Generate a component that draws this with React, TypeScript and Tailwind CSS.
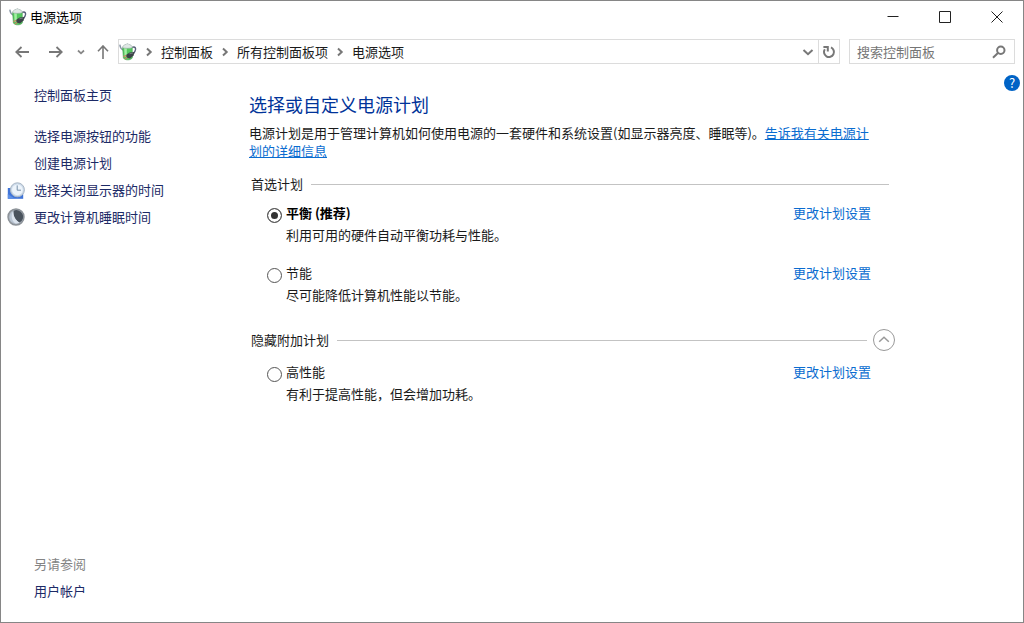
import { useState } from 'react'

type Plan = { id: string; name: string; desc: string }

const preferredPlans: Plan[] = [
  { id: 'balanced', name: '平衡 (推荐)', desc: '利用可用的硬件自动平衡功耗与性能。' },
  { id: 'saver', name: '节能', desc: '尽可能降低计算机性能以节能。' },
]

const extraPlans: Plan[] = [
  { id: 'high', name: '高性能', desc: '有利于提高性能，但会增加功耗。' },
]

function PowerIcon() {
  return (
    <svg width="18" height="18" viewBox="0 0 18 18" fill="none" className="shrink-0">
      <path d="M.8 1.6c.2 2.4.8 4.2 3.6 5.6" stroke="#8795a5" strokeWidth="1.3" />
      <path d="M12.8 4.6c3.6-1.6 4.6.8 3.2 3.6l-1.8 3" stroke="#59617a" strokeWidth="1.4" />
      <path d="M3.6 4.4h9.6l.2 10.4c-1.4 2.6-7.4 2.8-9 .2z" fill="#55c95f" stroke="#439a4b" strokeWidth=".6" />
      <path d="M5.2 5.2h2.6v8L5.6 14z" fill="#a3efa4" />
      <path d="M3.4 4.4C4 2.2 6 1.6 7 1.4c.4-1 2.4-1 2.8 0 1.6.2 3.2 1 3.6 3-2.4 1.2-7.6 1.2-10 0z" fill="#dfe8e5" stroke="#9aaba7" strokeWidth=".6" />
      <path d="m7 12 3.6-2.6 4.8-.4-.8 3.4-3.6 3-3.2-.6z" fill="#3b4347" />
      <path d="m10.4 10.8 3.6-.8" stroke="#818b90" strokeWidth=".8" />
      <path d="m4.4 13.8 2.8-1.4M5.8 16l2.4-1.4" stroke="#c58a60" strokeWidth="1.2" />
    </svg>
  )
}

function ClockIcon() {
  return (
    <svg width="18" height="19" viewBox="0 0 18 19" fill="none" className="shrink-0">
      <path d="M.8 7h15.4v10.8H.8z" fill="#3f74d8" />
      <path d="M.8 13 8 17.8H.8z" fill="#5f90e6" />
      <circle cx="10.4" cy="8.8" r="7" fill="#cddbea" stroke="#a9b6c4" strokeWidth="1" />
      <circle cx="10.4" cy="8.8" r="5.4" fill="#edf4fb" />
      <path d="M10.2 4.4v4.8h3.8" stroke="#7890a8" strokeWidth="1" />
    </svg>
  )
}

function MoonIcon() {
  return (
    <svg width="18" height="18" viewBox="0 0 18 18" fill="none" className="shrink-0">
      <circle cx="9" cy="9" r="8" fill="#a4abb4" stroke="#8c9298" strokeWidth="1.4" />
      <circle cx="9" cy="9" r="6.6" fill="#b9c5d3" />
      <path d="M6.4 2.9A6.6 6.6 0 1 1 12.6 14.6C8.4 12.4 5.8 7.6 6.4 2.9z" fill="#4a535d" />
      <path d="M6.4 2.9c-.4 4.8 2 9.4 6.2 11.7-1.2.8-3.2 1-4.6.6C4.6 12.2 3.4 7 6.4 2.9z" fill="#dce4ee" />
    </svg>
  )
}

function Chevron({ dir = 'right' }: { dir?: 'right' | 'down' }) {
  return (
    <svg width="12" height="12" viewBox="0 0 12 12" fill="none" stroke="#777" strokeWidth="2">
      {dir === 'right' ? <path d="m4 2.5 3.7 3.5L4 9.5" /> : <path d="m1.5 4 4.5 4.2L10.5 4" />}
    </svg>
  )
}

const sideLinks = [
  { text: '选择电源按钮的功能', icon: null },
  { text: '创建电源计划', icon: null },
  { text: '选择关闭显示器的时间', icon: <ClockIcon /> },
  { text: '更改计算机睡眠时间', icon: <MoonIcon /> },
]

const crumbs = ['控制面板', '所有控制面板项', '电源选项']

export default function App() {
  const [selected, setSelected] = useState('balanced')
  const [showExtra, setShowExtra] = useState(true)
  const [query, setQuery] = useState('')

  const renderPlan = (plan: Plan) => (
    <div key={plan.id} className="flex items-start justify-between pl-[18px] pr-6">
      <div>
        <div className="flex h-5 items-center gap-1">
          <input
            type="radio"
            id={plan.id}
            name="plan"
            checked={selected === plan.id}
            onChange={() => setSelected(plan.id)}
            className="mt-1 size-[15px] appearance-none rounded-full border border-[#555] bg-white checked:bg-[#333] checked:shadow-[inset_0_0_0_3px_#fff]"
          />
          <label htmlFor={plan.id} className={selected === plan.id ? 'font-bold text-black' : ''}>{plan.name}</label>
        </div>
        <p className="mt-0.5 pl-[19px]">{plan.desc}</p>
      </div>
      <a href="#settings" className="text-[#0a6cd0] hover:underline">更改计划设置</a>
    </div>
  )

  return (
    <div className="flex min-h-screen flex-col border border-[#868686] bg-white font-['Noto_Sans_CJK_SC','Liberation_Sans',sans-serif] text-[13px] leading-5 text-[#1a1a1a]">
      <header className="flex h-8 items-center justify-between">
        <div className="flex items-center gap-[3px] pl-2">
          <PowerIcon />
          <h1 className="text-black">电源选项</h1>
        </div>
        <div className="flex">
          <button aria-label="最小化" className="grid h-8 w-[52px] place-items-center hover:bg-gray-200">
            <svg width="12" height="12" stroke="#222"><path d="M.5 5.5h11" /></svg>
          </button>
          <button aria-label="最大化" className="grid h-8 w-[52px] place-items-center hover:bg-gray-200">
            <svg width="12" height="12" fill="none" stroke="#222"><path d="M.5.5h11v11H.5z" /></svg>
          </button>
          <button aria-label="关闭" className="grid h-8 w-[52px] place-items-center hover:bg-red-500">
            <svg width="12" height="12" stroke="#222"><path d="m.5.5 11 11m0-11-11 11" /></svg>
          </button>
        </div>
      </header>

      <nav className="mt-1.5 flex h-[25px] items-stretch pr-2">
        <div className="flex w-[117px] items-center pl-3.5">
          <button aria-label="后退">
            <svg width="14" height="14" viewBox="0 0 14 14" fill="none" stroke="#777" strokeWidth="1.8"><path d="M14 7H1m5.5-5L1.2 7l5.3 5" /></svg>
          </button>
          <button aria-label="前进" className="ml-5">
            <svg width="14" height="14" viewBox="0 0 14 14" fill="none" stroke="#777" strokeWidth="1.8"><path d="M0 7h13M7.5 2l5.3 5-5.3 5" /></svg>
          </button>
          <button aria-label="最近" className="ml-3.5">
            <svg width="8" height="8" viewBox="0 0 8 8" fill="none" stroke="#888" strokeWidth="1.8"><path d="m1 2.5 3 2.8 3-2.8" /></svg>
          </button>
          <button aria-label="向上" className="ml-3">
            <svg width="12" height="14" viewBox="0 0 12 14" fill="none" stroke="#777" strokeWidth="1.6"><path d="M6 14V1M1 6.3 6 1l5 5.3" /></svg>
          </button>
        </div>
        <div className="flex flex-1 items-center border border-[#dcdcdc]">
          <PowerIcon />
          {crumbs.map((c) => (
            <div key={c} className="flex items-center">
              <span className="grid w-6 place-items-center"><Chevron /></span>
              <a href="#path" className="hover:bg-sky-100">{c}</a>
            </div>
          ))}
          <button aria-label="历史记录" className="ml-auto px-1"><Chevron dir="down" /></button>
          <button aria-label="刷新" className="grid h-full w-[21px] place-items-center border-l border-[#dcdcdc]">
            <svg width="14" height="14" viewBox="0 0 14 14" fill="none" stroke="#777" strokeWidth="2">
              <path d="M9 2.4a5 5 0 1 1-6.2 1.8" />
              <path d="M1.4 2h4.4v4.4" />
            </svg>
          </button>
        </div>
        <div className="ml-[9px] flex w-[166px] items-center border border-[#dcdcdc] pl-[7px] pr-2">
          <input
            type="text"
            aria-label="搜索控制面板"
            value={query}
            onChange={(e) => setQuery(e.target.value)}
            placeholder="搜索控制面板"
            className="h-5 min-w-0 flex-1 outline-none placeholder:text-[#757575]"
          />
          <svg width="14" height="14" viewBox="0 0 14 14" fill="none" stroke="#777" strokeWidth="2">
            <circle cx="8.8" cy="5.2" r="3.7" />
            <path d="M6.2 7.8 1 12.8" />
          </svg>
        </div>
      </nav>

      <div className="flex flex-1">
        <aside className="flex w-[248px] shrink-0 flex-col pb-[21px] pl-1.5 pt-[21px] text-[#1c2a66]">
          <a href="#home" className="ml-[27px] hover:underline">控制面板主页</a>
          <ul className="mt-[21px] flex flex-col gap-[7px]">
            {sideLinks.map((l) => (
              <li key={l.text} className="flex h-5 items-center">
                <span className="w-[27px]">{l.icon}</span>
                <a href="#task" className="hover:underline">{l.text}</a>
              </li>
            ))}
          </ul>
          <div className="ml-[27px] mt-auto flex flex-col gap-[7px]">
            <p className="text-[#848484]">另请参阅</p>
            <a href="#users" className="hover:underline">用户帐户</a>
          </div>
        </aside>

        <main className="max-w-[646px] flex-1 pt-7">
          <h2 className="text-[18px] leading-6 text-[#003399]">选择或自定义电源计划</h2>
          <p className="mt-2 pr-[18px] leading-[18px]">
            电源计划是用于管理计算机如何使用电源的一套硬件和系统设置(如显示器亮度、睡眠等)。
            <a href="#more" className="text-[#0a6cd0] underline">告诉我有关电源计划的详细信息</a>
          </p>

          <div className="mt-3.5 flex items-center gap-2 pl-0.5 pr-1.5">
            <h3>首选计划</h3>
            <hr className="flex-1 border-[#c3c3c3]" />
          </div>
          <div className="mt-[9px] flex flex-col gap-[18px]">{preferredPlans.map(renderPlan)}</div>

          <div className="mt-6 flex items-center pl-0.5">
            <h3>隐藏附加计划</h3>
            <hr className="ml-2 mr-1.5 flex-1 border-[#c3c3c3]" />
            <button
              aria-label="隐藏附加计划"
              aria-expanded={showExtra}
              onClick={() => setShowExtra(!showExtra)}
              className="grid size-[22px] place-items-center rounded-full border border-[#999]"
            >
              <svg width="12" height="12" viewBox="0 0 12 12" fill="none" stroke="#999" strokeWidth="1.5" className={showExtra ? '' : 'rotate-180'}>
                <path d="m1.2 7.8 4.8-4.6 4.8 4.6" />
              </svg>
            </button>
          </div>
          {showExtra && <div className="mt-[11px] flex flex-col gap-[18px]">{extraPlans.map(renderPlan)}</div>}
        </main>

        <button aria-label="帮助" className="ml-auto mr-[3px] mt-[11px] grid size-4 shrink-0 place-items-center self-start rounded-full bg-[#0063c6] text-[13px] leading-4 text-white">
          ?
        </button>
      </div>
    </div>
  )
}
